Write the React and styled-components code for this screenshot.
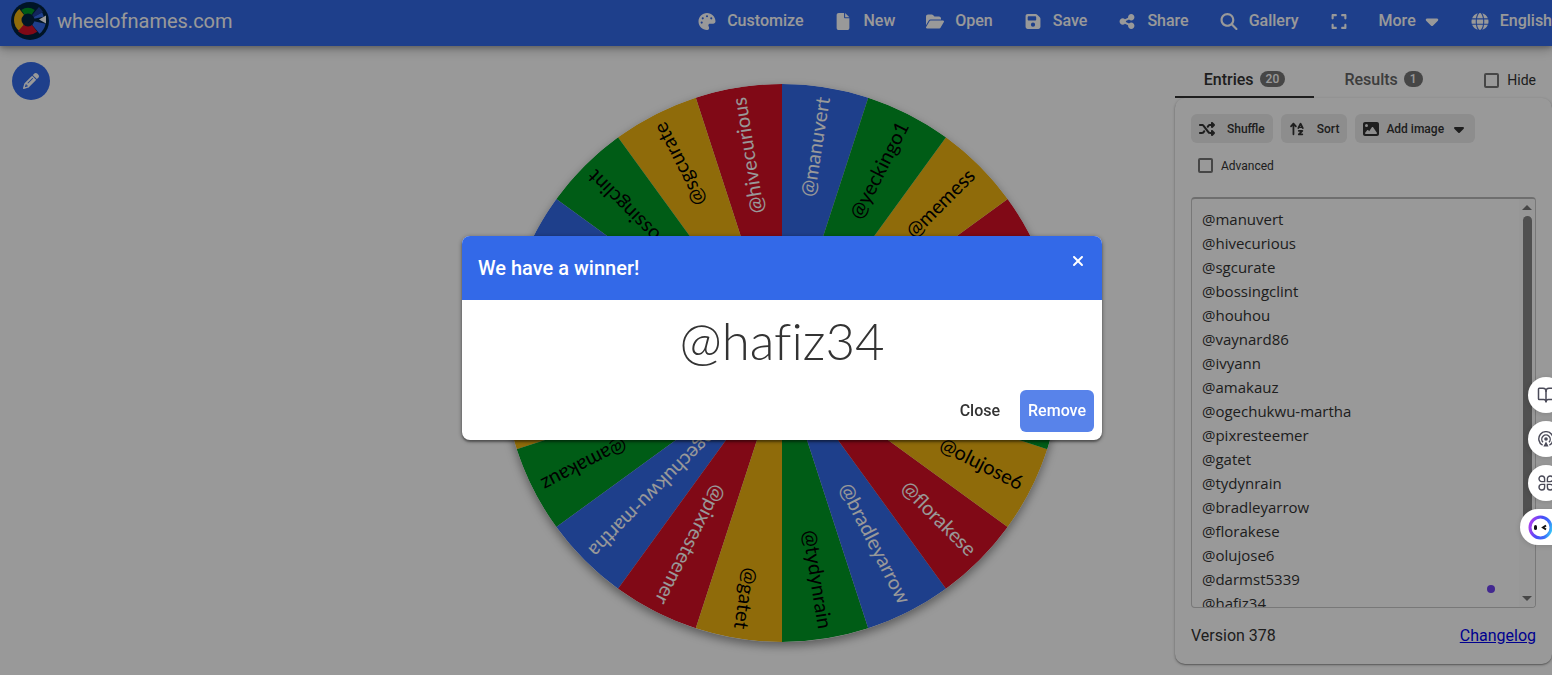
import React from "react";
import styled, { createGlobalStyle, css } from "styled-components";
import {
  FaPalette,
  FaFile,
  FaFolderOpen,
  FaFloppyDisk,
  FaShareNodes,
  FaMagnifyingGlass,
  FaExpand,
  FaCaretDown,
  FaGlobe,
  FaPencil,
  FaShuffle,
  FaArrowUpAZ,
  FaImage,
  FaXmark,
} from "react-icons/fa6";
import { BookOpen } from "lucide-react";

const BLUE = "#3369e8";
const RED = "#d50f25";
const YELLOW = "#eeb211";
const GREEN = "#009925";

const GlobalStyle = createGlobalStyle`
  * {
    box-sizing: border-box;
  }
  body {
    margin: 0;
    background: #fff;
    color: #333;
    font-family: Roboto, "Liberation Sans", sans-serif;
    overflow: hidden;
  }
  button {
    font-family: inherit;
    border: none;
    padding: 0;
    cursor: pointer;
  }
`

const Page = styled.div`
  min-height: 100vh;
  overflow: hidden;
`
const Header = styled.header`
  display: flex;
  align-items: center;
  height: 46px;
  padding-left: 11px;
  background: ${BLUE};
  color: #fff;
  box-shadow: 0 2px 4px rgba(0,0,0,.2), 0 4px 10px rgba(0,0,0,.24);
`
const Brand = styled.a`
  display: flex;
  align-items: center;
  gap: 8px;
  height: 42px;
  margin-bottom: 4px;
  color: #fff;
  font-size: 20px;
  text-decoration: none;
`
const Nav = styled.nav`
  display: flex;
  align-items: center;
  margin-left: auto;
  margin-right: -16px;
  padding-bottom: 4px;
`
const NavButton = styled.button`
  display: flex;
  align-items: center;
  flex: none;
  gap: 12px;
  padding: 0 16px;
  background: none;
  color: #fff;
  font-size: 16px;
  font-weight: 500;
  line-height: 24px;
`
const NavIcon = styled.span`
  display: flex;
  justify-content: center;
  width: 16px;

  svg {
    flex: none;
    width: 18px;
    height: 17px;
  }
`
const Caret = styled(FaCaretDown)`
  width: 16px;
  height: 20px;
  margin-left: -4px;
`

const Main = styled.main`
  display: grid;
  grid-template-columns: 377px 1fr 377px;
  align-items: start;
  padding-left: 12px;
`
const Left = styled.div`
  padding-top: 16px;
`
const RoundButton = styled.button`
  display: flex;
  align-items: center;
  justify-content: center;
  width: 38px;
  height: 38px;
  border-radius: 50%;
  background: ${BLUE};
  color: #fff;
`
const WheelArea = styled.div`
  display: flex;
  justify-content: center;
  padding-top: 38px;
`
const WheelSvg = styled.svg`
  flex: none;
  width: 558px;
  height: 558px;
  border-radius: 50%;
  box-shadow: 0 4px 10px rgba(0,0,0,.4);
  font-family: Lato, sans-serif;
  font-size: 20px;
`

const Side = styled.aside`
  padding-top: 16px;
`
const Tabs = styled.div`
  display: flex;
  align-items: stretch;
  height: 36px;
`
const Tab = styled.button`
  display: flex;
  align-items: center;
  justify-content: center;
  gap: 6px;
  width: 139px;
  color: ${(props) => (props.$active ? "#333" : "#666")};
  background: none;
  border-bottom: 2px solid ${(props) => (props.$active ? "#333" : "transparent")};
  font-size: 16px;
  font-weight: 500;
`
const Badge = styled.span`
  padding: 0 6px;
  border-radius: 8px;
  background: #757575;
  color: #fff;
  font-size: 12px;
  line-height: 16px;
`
const CheckLabel = styled.label`
  display: flex;
  align-items: center;
  gap: 8px;
  font-size: ${(props) => (props.$small ? 12 : 14)}px;
`
const HideLabel = styled(CheckLabel)`
  margin-left: auto;
  padding-right: 16px;
`
const Check = styled.input`
  appearance: none;
  width: 15px;
  height: 15px;
  margin: 0;
  border: 2px solid #757575;
  border-radius: 2px;
`
const Card = styled.section`
  padding: 16px;
  border-radius: 10px;
  box-shadow: 0 1px 3px rgba(0,0,0,.3), 0 1px 1px rgba(0,0,0,.2);
`
const Tools = styled.div`
  display: flex;
  gap: 8px;
`
const ToolButton = styled.button`
  display: flex;
  align-items: center;
  gap: ${(props) => props.$gap}px;
  height: 29px;
  padding: 0 8px;
  border-radius: 6px;
  background: #ebebeb;
  color: #333;
  font-size: 12px;
  font-weight: 500;

  svg {
    width: 16px;
    height: 16px;
  }
`
const Advanced = styled.div`
  padding: 15px 7px 24px;
`
const EntriesBox = styled.div`
  display: flex;
  position: relative;
  height: 411px;
  border: 1px solid #c8c8c8;
  border-top: 2px solid #b8b8b8;
  border-radius: 4px;
  overflow: hidden;
`
const EntriesText = styled.textarea`
  flex: 1;
  min-width: 0;
  padding: 8px 10px;
  border: none;
  outline: none;
  resize: none;
  overflow: hidden;
  background: transparent;
  color: #333;
  font-family: "Open Sans", "Noto Sans", sans-serif;
  font-size: 15px;
  line-height: 24px;
`
const ScrollBar = styled.div`
  display: flex;
  flex-direction: column;
  align-items: center;
  width: 16px;
  padding: 6px 0;
  background: #fcfcfc;
`
const Arrow = styled.span`
  border: 5px solid transparent;
  border-top-width: 0;
  border-bottom: 5px solid #777;
  ${(props) =>
    props.$down &&
    css`
      margin-top: auto;
      transform: rotate(180deg);
    `}
`
const Thumb = styled.span`
  width: 9px;
  height: 316px;
  margin-top: 6px;
  border-radius: 5px;
  background: #858585;
`
const Dot = styled.span`
  position: absolute;
  right: 40px;
  bottom: 14px;
  width: 8px;
  height: 8px;
  border-radius: 50%;
  background: #6e43f0;
`
const Footer = styled.div`
  display: flex;
  justify-content: space-between;
  padding-top: 16px;
  font-size: 16px;
  line-height: 24px;
`
const Changelog = styled.a`
  color: #0000ee;
`

const Backdrop = styled.div`
  position: fixed;
  inset: 0;
  display: flex;
  align-items: center;
  justify-content: center;
  padding-left: 12px;
  background: rgba(0,0,0,.4);
`
const Dialog = styled.div`
  width: 640px;
  max-width: 100%;
  border-radius: 8px;
  background: #fff;
  overflow: hidden;
  box-shadow: 0 1px 5px rgba(0,0,0,.4), 0 2px 2px rgba(0,0,0,.3);
`
const DialogHeader = styled.div`
  display: flex;
  justify-content: space-between;
  height: 64px;
  padding: 0 16px;
  background: ${BLUE};
  color: #fff;
`
const DialogTitle = styled.h2`
  margin: 0;
  font-size: 20px;
  font-weight: 500;
  line-height: 64px;
`
const CloseIcon = styled.button`
  display: flex;
  align-items: center;
  height: 50px;
  background: none;
  color: #fff;
`
const Winner = styled.div`
  padding: 8px 16px;
  font-family: Lato, sans-serif;
  font-size: 51px;
  font-weight: 300;
  font-variant-ligatures: none;
  line-height: 66px;
  text-align: center;
`
const Actions = styled.div`
  display: flex;
  justify-content: flex-end;
  gap: 12px;
  padding: 8px;
`
const ActionButton = styled.button`
  height: 42px;
  padding: 0 8px;
  border-radius: 6px;
  background: ${(props) => (props.$primary ? "#5883ea" : "none")};
  color: ${(props) => (props.$primary ? "#fff" : "#333")};
  font-size: 16px;
  font-weight: 500;
`

const Floating = styled.div`
  position: fixed;
  top: 377px;
  right: -12px;
  display: flex;
  flex-direction: column;
  align-items: flex-end;
  gap: 8px;
`
const FloatButton = styled.button`
  display: flex;
  align-items: center;
  justify-content: ${(props) => (props.$wide ? "flex-start" : "center")};
  width: ${(props) => (props.$wide ? 44 : 36)}px;
  height: 36px;
  padding-left: ${(props) => (props.$wide ? 8 : 0)}px;
  border-radius: ${(props) => (props.$wide ? "18px 0 0 18px" : "50%")};
  background: #fff;
  color: #4a4a58;
  box-shadow: 0 1px 6px rgba(0,0,0,.15);
`

// counter-clockwise from the top
const slices = [
  "@manuvert",
  "@hivecurious",
  "@sgcurate",
  "@bossingclint",
  "@houhou",
  "@vaynard86",
  "@ivyann",
  "@amakauz",
  "@ogechukwu-martha",
  "@pixresteemer",
  "@gatet",
  "@tydynrain",
  "@bradleyarrow",
  "@florakese",
  "@olujose6",
  "@darmst5339",
  "@hafiz34",
  "",
  "@memess",
  "@yeckingo1",
]
const sliceColors = [BLUE, RED, YELLOW, GREEN]

const navItems = [
  { label: "Customize", icon: FaPalette },
  { label: "New", icon: FaFile },
  { label: "Open", icon: FaFolderOpen },
  { label: "Save", icon: FaFloppyDisk },
  { label: "Share", icon: FaShareNodes },
  { label: "Gallery", icon: FaMagnifyingGlass },
]

const point = (cx, cy, r, deg) => {
  const a = (deg * Math.PI) / 180
  return `${cx + r * Math.sin(a)} ${cy - r * Math.cos(a)}`
}

const wedge = (cx, cy, r, from, to) =>
  `M${cx} ${cy}L${point(cx, cy, r, from)}A${r} ${r} 0 0 1 ${point(cx, cy, r, to)}Z`

const Logo = () => (
  <svg width="38" height="38" viewBox="0 0 38 38">
    <circle cx="19" cy="19" r="19" fill="#00223f" />
    <path d={wedge(17, 18, 14, 218, 322)} fill={YELLOW} />
    <path d={wedge(17, 18, 12, 326, 394)} fill={GREEN} />
    <path d={wedge(17, 18, 17, 40, 62)} fill="#1f3f98" />
    <path d={wedge(17, 18, 16, 62, 78)} fill={BLUE} />
    <path d={wedge(17, 18, 18, 102, 140)} fill={BLUE} />
    <path d={wedge(17, 18, 15, 142, 222)} fill={RED} />
    <circle cx="17" cy="18" r="6.5" fill="#00223f" />
    <path d="M28 17.5L35 13.5V21.5Z" fill="#fff" />
  </svg>
)

const Wheel = () => (
  <WheelArea>
    <WheelSvg viewBox="-279 -279 558 558">
      {slices.map((name, i) => {
        const start = -18 * i
        const color = sliceColors[i % 4]
        return (
          <g key={i}>
            <path d={wedge(0, 0, 279, start, start + 18)} fill={color} />
            <text
              x="269"
              y="6"
              textAnchor="end"
              fill={color === BLUE || color === RED ? "#fff" : "#000"}
              transform={`rotate(${start + 9 - 90})`}
            >
              {name}
            </text>
          </g>
        )
      })}
    </WheelSvg>
  </WheelArea>
)

const Broadcast = () => (
  <svg width="16" height="16" viewBox="0 0 16 16" fill="none" stroke="currentColor" strokeWidth="1.4">
    <path d="M4.6 14.2A7.2 7.2 0 1 1 11.4 14.2" />
    <path d="M5 11.2A4.2 4.2 0 1 1 11 11.2" />
    <circle cx="8" cy="8" r="1.8" fill="currentColor" stroke="none" />
    <path d="M8 10.6L10.6 15.4H5.4Z" fill="currentColor" stroke="none" />
  </svg>
)

const Petals = () => (
  <svg width="16" height="16" viewBox="0 0 16 16" fill="none" stroke="currentColor" strokeWidth="1.4">
    <path d="M6.6 6.6H3.8A2.8 2.8 0 1 1 6.6 3.8Z" />
    <path d="M9.4 6.6V3.8A2.8 2.8 0 1 1 12.2 6.6Z" />
    <path d="M6.6 9.4V12.2A2.8 2.8 0 1 1 3.8 9.4Z" />
    <path d="M9.4 9.4H12.2A2.8 2.8 0 1 1 9.4 12.2Z" />
  </svg>
)

const Face = () => (
  <svg width="25" height="25" viewBox="0 0 25 25">
    <defs>
      <linearGradient id="ring" x1="0" y1=".5" x2="1" y2=".8">
        <stop offset="0" stopColor="#a040f0" />
        <stop offset=".4" stopColor="#4a4cf8" />
        <stop offset=".75" stopColor="#3a6cf8" />
        <stop offset="1" stopColor="#38c8f8" />
      </linearGradient>
    </defs>
    <circle cx="12.5" cy="12.5" r="10.5" fill="#fff" stroke="url(#ring)" strokeWidth="3" />
    <rect x="6" y="10" width="3" height="5" rx="1.5" fill="#111" />
    <path d="M18 10.5L15 12.5L18 14.5" fill="none" stroke="#111" strokeWidth="2" />
  </svg>
)

const App = () => {
  return (
    <>
      <GlobalStyle />
      <Page>
        <Header>
          <Brand href="#">
            <Logo />
            wheelofnames.com
          </Brand>
          <Nav>
            {navItems.map(({ label, icon: Icon }) => (
              <NavButton key={label}>
                <NavIcon><Icon /></NavIcon>
                {label}
              </NavButton>
            ))}
            <NavButton aria-label="Fullscreen">
              <NavIcon><FaExpand /></NavIcon>
            </NavButton>
            <NavButton>
              More
              <Caret />
            </NavButton>
            <NavButton>
              <NavIcon><FaGlobe /></NavIcon>
              English
            </NavButton>
          </Nav>
        </Header>
        <Main>
          <Left>
            <RoundButton aria-label="Edit">
              <FaPencil size={16} />
            </RoundButton>
          </Left>
          <Wheel />
          <Side>
            <Tabs>
              <Tab $active>Entries <Badge>20</Badge></Tab>
              <Tab>Results <Badge>1</Badge></Tab>
              <HideLabel>
                <Check type="checkbox" />
                Hide
              </HideLabel>
            </Tabs>
            <Card>
              <Tools>
                <ToolButton $gap={12}><FaShuffle />Shuffle</ToolButton>
                <ToolButton $gap={12}><FaArrowUpAZ />Sort</ToolButton>
                <ToolButton $gap={7}><FaImage />Add image<FaCaretDown /></ToolButton>
              </Tools>
              <Advanced>
                <CheckLabel $small>
                  <Check type="checkbox" />
                  Advanced
                </CheckLabel>
              </Advanced>
              <EntriesBox>
                <EntriesText
                  aria-label="Entries"
                  spellCheck={false}
                  defaultValue={slices.slice(0, 17).join("\n")}
                />
                <ScrollBar>
                  <Arrow />
                  <Thumb />
                  <Arrow $down />
                </ScrollBar>
                <Dot />
              </EntriesBox>
              <Footer>
                <span>Version 378</span>
                <Changelog href="#">Changelog</Changelog>
              </Footer>
            </Card>
          </Side>
        </Main>
      </Page>
      <Backdrop>
        <Dialog role="dialog" aria-label="We have a winner!">
          <DialogHeader>
            <DialogTitle>We have a winner!</DialogTitle>
            <CloseIcon aria-label="Close">
              <FaXmark size={16} />
            </CloseIcon>
          </DialogHeader>
          <Winner>@hafiz34</Winner>
          <Actions>
            <ActionButton>Close</ActionButton>
            <ActionButton $primary>Remove</ActionButton>
          </Actions>
        </Dialog>
      </Backdrop>
      <Floating>
        <FloatButton aria-label="Read"><BookOpen size={18} strokeWidth={2} /></FloatButton>
        <FloatButton aria-label="Podcast"><Broadcast /></FloatButton>
        <FloatButton aria-label="Apps"><Petals /></FloatButton>
        <FloatButton $wide aria-label="Assistant"><Face /></FloatButton>
      </Floating>
    </>
  )
}

export default App
